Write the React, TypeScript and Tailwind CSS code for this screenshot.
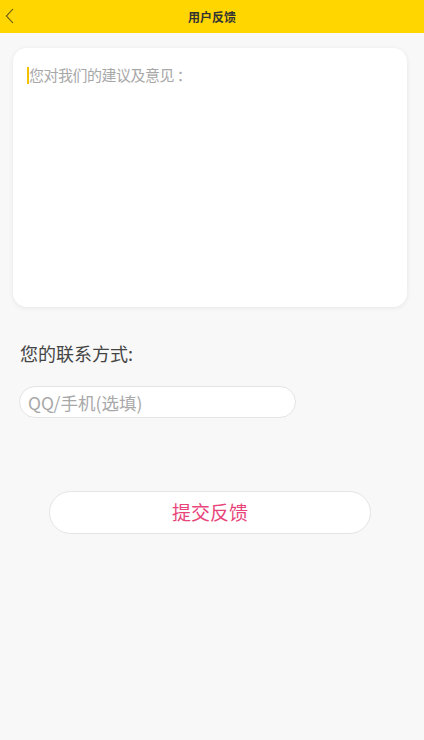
import { useState } from 'react';

export default function App() {
  const [texto, setTexto] = useState('');
  const [contacto, setContacto] = useState('');

  return (
    <main className="min-h-screen bg-[#f8f8f8] font-['Noto_Sans_CJK_SC',sans-serif]">
      <div className="relative h-[33px] bg-[#ffd600] flex items-center justify-center">
        <button className="absolute left-[3px] top-[7px] w-[12px] h-[18px] flex items-center justify-center">
          <svg width="9" height="16" viewBox="0 0 9 16" fill="none">
            <path d="M8 1L1.5 8L8 15" stroke="#5a4d1a" strokeWidth="1.1" />
          </svg>
        </button>
        <h1 className="text-[12px] font-bold text-[#333] leading-none">用户反馈</h1>
      </div>

      <div className="pl-[13px] pr-[17px] pt-[15px]">
        <div className="relative bg-white rounded-[14px] h-[259px] shadow-[0_1px_5px_rgba(0,0,0,0.08)] px-[14px] pt-[16px]">
          {texto === '' && (
            <div className="absolute left-[14px] top-[16px] flex items-center h-[22px] pointer-events-none">
              <span className="w-[2px] h-[17px] bg-[#f2c200]"></span>
              <span className="text-[15px] text-[#a8a8a8] tracking-[-0.5px]">您对我们的建议及意见 ：</span>
            </div>
          )}
          <textarea
            value={texto}
            onChange={(e) => setTexto(e.target.value)}
            className="w-full h-full resize-none outline-none bg-transparent text-[15px] leading-[22px] text-[#333] caret-[#ffd600]"
          />
        </div>
      </div>

      <div className="px-[20px] pt-[34px]">
        <p className="text-[18px] text-[#444] leading-[24px]">您的联系方式:</p>
      </div>

      <div className="px-[19px] pt-[21px]">
        <input
          value={contacto}
          onChange={(e) => setContacto(e.target.value)}
          placeholder="QQ/手机(选填)"
          className="w-[277px] h-[32px] rounded-full border border-[#e4e4e4] bg-white px-[8px] text-[17.5px] text-[#333] placeholder:text-[#a8a8a8] outline-none"
        />
      </div>

      <div className="px-[49px] pt-[73px]">
        <button className="w-[322px] h-[43px] rounded-full border border-[#e4e4e4] bg-white text-[19px] text-[#e8457a] flex items-center justify-center">
          提交反馈
        </button>
      </div>
    </main>
  );
}
